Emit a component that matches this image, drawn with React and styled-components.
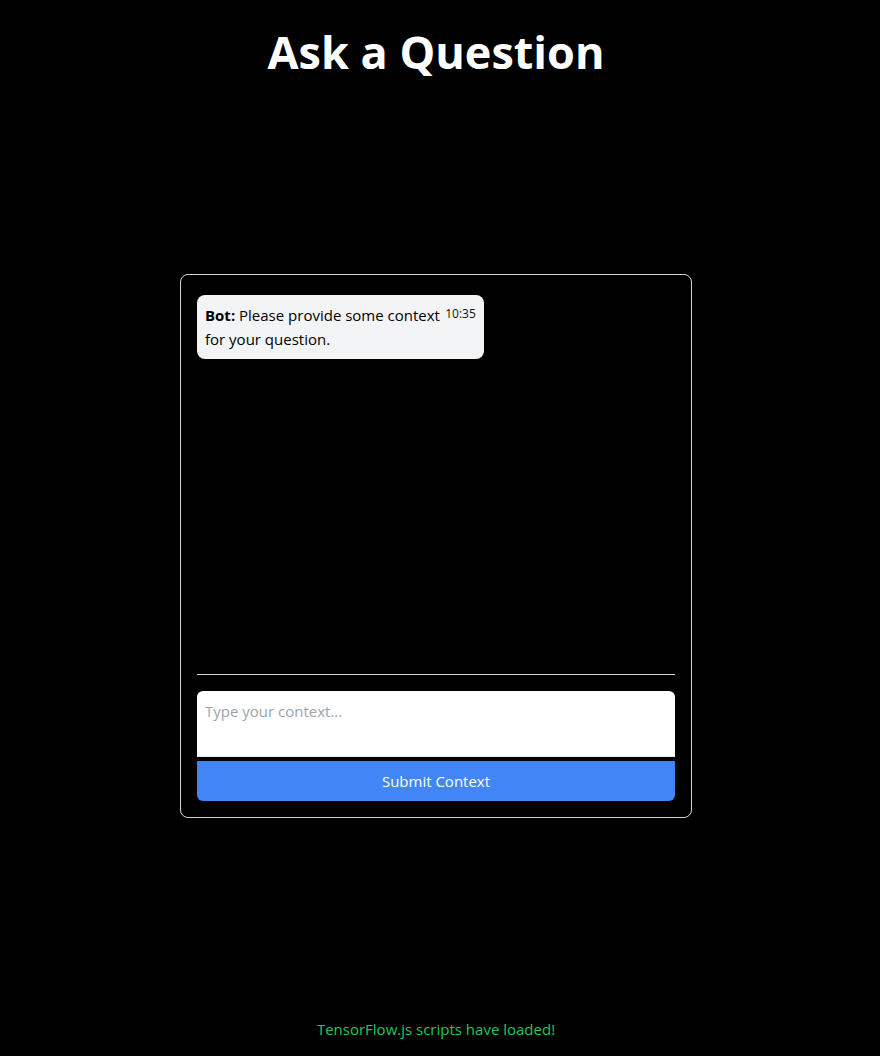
import React from "react";
import styled, { createGlobalStyle } from "styled-components";

const Global = createGlobalStyle`
  html, body { margin: 0; padding: 0; background: #000; }
  body { font-family: "Segoe UI", "Open Sans", "Noto Sans", sans-serif; color: #fff; }
  * { box-sizing: border-box; }
`;

const Page = styled.div`
  min-height: 1056px;
  padding-right: 8px;
  display: flex;
  flex-direction: column;
  align-items: center;
`;

const Title = styled.h1`
  margin: 23px 0 0;
  font-size: 45px;
  line-height: 58px;
  font-weight: 700;
  color: #fff;
`;

const Card = styled.div`
  margin-top: 193px;
  width: 512px;
  height: 544px;
  border: 1px solid #d1d5db;
  border-radius: 8px;
  padding: 16px;
  display: flex;
  flex-direction: column;
`;

const Messages = styled.div`
  height: 384px;
  border-bottom: 1px solid #d1d5db;
  display: flex;
  flex-direction: column;
  align-items: flex-start;
  overflow-y: auto;
`;

const Bubble = styled.div`
  margin: 4px 0;
  max-width: 60%;
  background: #f3f4f6;
  color: #000;
  border-radius: 8px;
  padding: 8px;
  display: flex;
  align-items: flex-start;
  font-size: 15px;
  line-height: 24px;
`;

const BubbleText = styled.div`
  flex: 1;
`;

const Time = styled.span`
  margin: 2px 0 0 1px;
  font-size: 12px;
  line-height: 18px;
  color: #111;
  white-space: nowrap;
`;

const Input = styled.textarea`
  margin-top: 16px;
  height: 66px;
  width: 100%;
  border: none;
  border-bottom: 1px solid #e5e7eb;
  border-radius: 6px 6px 0 0;
  padding: 8px 8px;
  font-family: inherit;
  font-size: 15px;
  line-height: 24px;
  resize: none;
  outline: none;
  background: #fff;
  &::placeholder { color: #9ca3af; }
`;

const Submit = styled.button`
  margin-top: 4px;
  height: 40px;
  width: 100%;
  border: none;
  border-radius: 0 0 6px 6px;
  background: #4285f4;
  color: #fff;
  font-family: inherit;
  font-size: 15px;
  cursor: pointer;
`;

const Footer = styled.p`
  margin: auto 0 17px;
  font-size: 15px;
  line-height: 20px;
  color: #22c55e;
`;

export default function App() {
  return (
    <Page>
      <Global />
      <Title>Ask a Question</Title>
      <Card>
        <Messages>
          <Bubble>
            <BubbleText>
              <strong>Bot:</strong> Please provide some context for your question.
            </BubbleText>
            <Time>10:35</Time>
          </Bubble>
        </Messages>
        <Input placeholder="Type your context..." />
        <Submit>Submit Context</Submit>
      </Card>
      <Footer>TensorFlow.js scripts have loaded!</Footer>
    </Page>
  );
}
